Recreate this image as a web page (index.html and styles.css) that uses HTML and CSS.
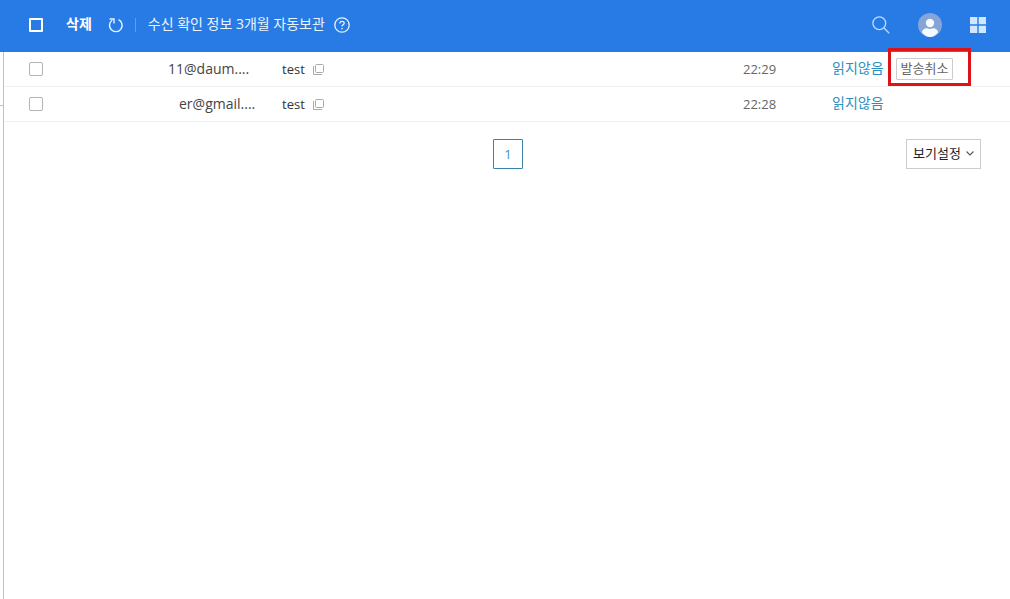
FILE: index.html
```html
<!DOCTYPE html>
<html lang="ko">
<head>
<meta charset="utf-8">
<title>수신확인</title>
<link rel="stylesheet" href="styles.css">
</head>
<body>
<header class="toolbar">
  <input class="check check-all" type="checkbox" aria-label="전체 선택">
  <button class="tool delete" type="button">삭제</button>
  <button class="tool refresh" type="button" aria-label="새로고침">
    <svg width="16" height="16" viewBox="0 0 16 16" fill="none" stroke="currentColor" stroke-width="1.4"><path d="M10.6 2.7A6.3 6.3 0 1 1 4.2 3.2"/><path d="M1.6 2H6V6.4"/></svg>
  </button>
  <span class="divider"></span>
  <span class="notice">수신 확인 정보 3개월 자동보관</span>
  <button class="tool help" type="button" aria-label="도움말">
    <svg width="16" height="16" viewBox="0 0 16 16" fill="none" stroke="currentColor" stroke-width="1.3"><circle cx="8" cy="8" r="7.2"/><path d="M5.8 6.4C5.8 3.6 10.2 3.7 10.2 6.2C10.2 7.9 8 7.8 8 9.6"/><path d="M8 10.9V12.3" stroke-width="1.5"/></svg>
  </button>
  <nav class="actions">
    <button class="tool" type="button" aria-label="검색">
      <svg width="18" height="18" viewBox="0 0 18 18" fill="none" stroke="#b9dcff" stroke-width="1.3"><circle cx="7.3" cy="7.3" r="6.4"/><path d="M12 12L17.2 17.2"/></svg>
    </button>
    <button class="tool" type="button" aria-label="내 계정">
      <svg width="24" height="24" viewBox="0 0 24 24"><circle cx="12" cy="12" r="12" fill="#85a5d6"/><g fill="#f4faff"><circle cx="12" cy="10" r="4.2"/><path d="M4 19.5C4 16.8 6.3 15.2 9 15.2Q12 16.8 15 15.2C17.7 15.2 20 16.8 20 19.5C18 22.2 15 24 12 24S6 22.2 4 19.5Z"/></g></svg>
    </button>
    <button class="tool" type="button" aria-label="서비스 목록">
      <svg width="16" height="16" viewBox="0 0 16 16" fill="#cfe7ff"><path d="M0 0H7.3V7.3H0ZM8.7 0H16V7.3H8.7ZM0 8.7H7.3V16H0ZM8.7 8.7H16V16H8.7Z"/></svg>
    </button>
  </nav>
</header>
<div class="page">
  <aside class="rail"><div class="rail-rule"></div></aside>
  <main class="content">
    <table class="mails">
      <colgroup><col class="col-check"><col class="col-to"><col><col class="col-time"><col class="col-state"></colgroup>
      <tbody>
        <tr>
          <td class="pick"><input class="check" type="checkbox" aria-label="test 선택"></td>
          <td class="to">11@daum....</td>
          <td><div class="subject"><a href="#">test</a><button class="popup" type="button" aria-label="새 창으로 읽기"><svg width="11" height="11" viewBox="0 0 11 11" fill="none" stroke="#aaa"><rect x="2.5" y=".5" width="8" height="8" rx="1"/><path d="M.5 2V10.5H9"/></svg></button></div></td>
          <td class="time">22:29</td>
          <td><div class="state"><a href="#">읽지않음</a><span class="highlight"><button class="cancel" type="button">발송취소</button></span></div></td>
        </tr>
        <tr>
          <td class="pick"><input class="check" type="checkbox" aria-label="test 선택"></td>
          <td class="to indented">er@gmail....</td>
          <td><div class="subject"><a href="#">test</a><button class="popup" type="button" aria-label="새 창으로 읽기"><svg width="11" height="11" viewBox="0 0 11 11" fill="none" stroke="#aaa"><rect x="2.5" y=".5" width="8" height="8" rx="1"/><path d="M.5 2V10.5H9"/></svg></button></div></td>
          <td class="time">22:28</td>
          <td><div class="state"><a href="#">읽지않음</a></div></td>
        </tr>
      </tbody>
    </table>
    <footer class="bottom">
      <button class="page-number" type="button" aria-current="page">1</button>
      <button class="view-settings" type="button">보기설정<svg width="8" height="5" viewBox="0 0 8 5" fill="none" stroke="#555" stroke-width="1.1"><path d="M.5 .5L4 4L7.5 .5"/></svg></button>
    </footer>
  </main>
</div>
</body>
</html>
```
FILE: styles.css
```css
* {
  box-sizing: border-box;
}

body {
  display: flex;
  flex-direction: column;
  min-height: 100vh;
  margin: 0;
  background: #fff;
  color: #444;
  font: 13px/20px "Open Sans", "Noto Sans CJK KR", sans-serif;
}

button {
  padding: 0;
  border: 0;
  background: none;
  color: inherit;
  font: inherit;
  cursor: pointer;
}

a {
  color: inherit;
  text-decoration: none;
}

svg {
  display: block;
}

.check {
  appearance: none;
  display: block;
  flex: none;
  width: 14px;
  height: 14px;
  margin: 0;
  border: 1px solid #b4b4b4;
  border-radius: 2px;
  background: #fff;
}

.check-all {
  border: 2px solid #fff;
  border-radius: 1px;
  background: none;
}

.toolbar {
  display: flex;
  align-items: center;
  height: 52px;
  padding: 0 24px 2px 29px;
  background: #287ae5;
  color: #e8f5ff;
  font-size: 14px;
}

.delete {
  margin-left: 23px;
  color: #fff;
  font-weight: 700;
}

.refresh {
  margin-left: 16px;
}

.divider {
  width: 1px;
  height: 14px;
  margin: 0 12px 0 11px;
  background: #5c9dee;
}

.delete,
.notice {
  padding-bottom: 2px;
}

.help {
  margin-left: 9px;
}

.actions {
  display: flex;
  align-items: center;
  gap: 28px;
  margin-left: auto;
}

.page {
  display: flex;
  flex: 1;
}

.rail {
  width: 4px;
  border-right: 1px solid #bfbfc4;
}

.rail-rule {
  height: 54px;
  border-bottom: 1px solid #bfbfc4;
}

.content {
  flex: 1;
}

.mails {
  width: 100%;
  table-layout: fixed;
  border-spacing: 0;
}

.mails td {
  height: 35px;
  padding: 0;
  border-bottom: 1px solid #f0f0f0;
}

.mails .pick {
  padding-left: 25px;
}

.col-check {
  width: 164px;
}

.col-to {
  width: 114px;
}

.col-time {
  width: 89px;
}

.col-state {
  width: 178px;
}

.to {
  font-size: 14px;
}

.mails .indented {
  padding-left: 11px;
}

.subject {
  display: flex;
  align-items: center;
  gap: 8px;
  color: #333;
}

.time {
  color: #666;
}

.state {
  display: flex;
  align-items: center;
  color: #2a8fbd;
  font-size: 14px;
}

.state a {
  padding-bottom: 2px;
}

.highlight {
  position: relative;
  margin-left: 12px;
}

.highlight::after {
  content: "";
  position: absolute;
  inset: -10px -18px -6px -8px;
  border: 3px solid #dc1418;
  pointer-events: none;
}

.cancel {
  display: block;
  height: 22px;
  padding: 0 4px 2px;
  border: 1px solid #ccc;
  border-radius: 1px;
  color: #666;
  font-size: 13px;
  line-height: 18px;
}

.mails td:last-child {
  line-height: 20px;
}

.bottom {
  display: grid;
  grid-template-columns: 1fr auto 1fr;
  padding: 17px 29px 0 31px;
}

.page-number {
  grid-column: 2;
  width: 30px;
  height: 30px;
  border: 1px solid #3c81a9;
  border-radius: 1px;
  color: #4296c4;
}

.view-settings {
  display: flex;
  align-items: center;
  justify-content: center;
  justify-self: end;
  gap: 5px;
  width: 75px;
  height: 30px;
  padding-bottom: 2px;
  border: 1px solid #ccc;
  color: #222;
}
```
